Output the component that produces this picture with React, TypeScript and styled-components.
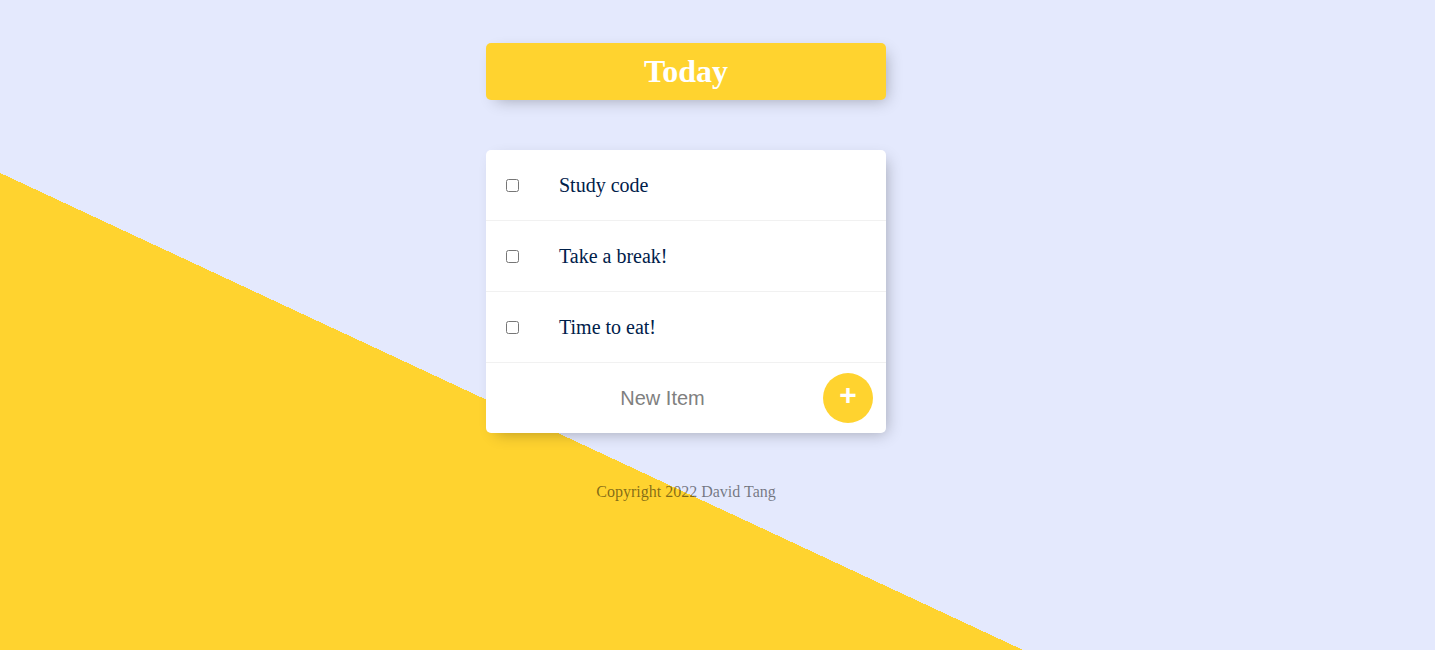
import React from "react";
import styled, { createGlobalStyle } from "styled-components";

const Global = createGlobalStyle`
  html, body { margin: 0; padding: 0; }
  body { background: #E4E9FD; }
`;

const Page = styled.div`
  min-height: 650px;
  box-sizing: border-box;
  padding-right: 63px;
  background-color: #E4E9FD;
  background-image: linear-gradient(25deg, #FFD32F 50%, #E4E9FD 50%);
  background-size: 100% 1015px;
  background-repeat: no-repeat;
  display: flex;
  flex-direction: column;
  align-items: center;
  overflow: hidden;
`;

const Box = styled.div<{ $top: number }>`
  width: 400px;
  margin-top: ${(p) => p.$top}px;
  background: #fff;
  border-radius: 5px;
  box-shadow: 5px 5px 15px -5px rgba(0, 0, 0, 0.3);
`;

const Heading = styled(Box)`
  background-color: #FFD32F;
  text-align: center;
`;

const Title = styled.h1`
  margin: 0;
  padding: 10px;
  font-family: "Liberation Serif", "Times New Roman", serif;
  font-size: 32px;
  line-height: 37px;
  font-weight: 700;
  color: #fff;
`;

const Item = styled.div`
  min-height: 70px;
  display: flex;
  align-items: center;
  border-bottom: 1px solid #F1F1F1;
`;

const Check = styled.input`
  margin: 20px;
  width: 13px;
  height: 13px;
`;

const Label = styled.p`
  margin: 0;
  padding: 20px;
  font-family: "Liberation Serif", "Times New Roman", serif;
  font-size: 20px;
  font-weight: 200;
  color: #00204a;
`;

const Form = styled.form`
  height: 70px;
  display: flex;
  align-items: center;
  gap: 4px;
  margin-left: 20px;
`;

const TextInput = styled.input`
  width: 313px;
  height: 60px;
  padding: 0;
  text-align: center;
  border: none;
  background: transparent;
  font-family: "Liberation Sans", Arial, sans-serif;
  font-size: 20px;
  font-weight: 200;
  &::placeholder { color: grey; opacity: 1; }
  &:focus { outline: none; }
`;

const AddButton = styled.button`
  width: 50px;
  height: 50px;
  border-radius: 50%;
  border: 0;
  padding: 0 0 6px;
  background-color: #FFD32F;
  color: #fff;
  font-family: "Liberation Sans", Arial, sans-serif;
  font-size: 30px;
  font-weight: 700;
  line-height: 1;
  display: flex;
  align-items: center;
  justify-content: center;
  cursor: pointer;
`;

const Footer = styled.footer`
  margin-top: 50px;
  font-family: "Liberation Serif", "Times New Roman", serif;
  font-size: 16px;
  line-height: 18px;
  color: rgba(0, 0, 0, 0.5);
  text-align: center;
`;

const items = ["Study code", "Take a break!", "Time to eat!"];

export default function App() {
  return (
    <>
      <Global />
      <Page>
        <Heading $top={43}>
          <Title>Today</Title>
        </Heading>
        <Box $top={50}>
          {items.map((t) => (
            <Item key={t}>
              <Check type="checkbox" />
              <Label>{t}</Label>
            </Item>
          ))}
          <Form onSubmit={(e) => e.preventDefault()}>
            <TextInput type="text" placeholder="New Item" autoComplete="off" />
            <AddButton type="submit">+</AddButton>
          </Form>
        </Box>
        <Footer>Copyright 2022 David Tang</Footer>
      </Page>
    </>
  );
}
